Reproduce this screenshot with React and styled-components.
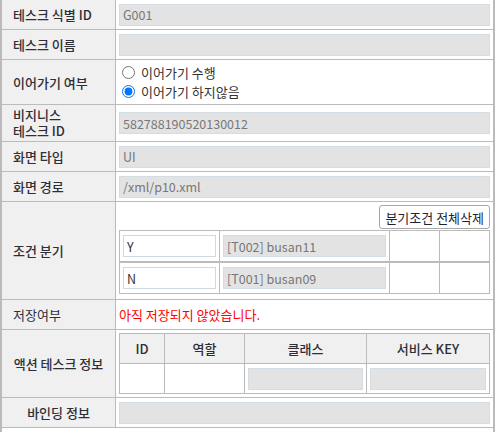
import React from 'react';
import styled, { createGlobalStyle } from 'styled-components';

const lineColor = '#bbbbbb';
const fontStack = '"Noto Sans CJK KR", "Open Sans", sans-serif';

const GlobalStyle = createGlobalStyle`
  html, body {
    margin: 0;
    padding: 0;
    background: #ffffff;
  }
  body {
    font-family: ${fontStack};
    font-size: 13px;
    color: #333333;
  }
`;

const Form = styled.div`
  width: 491px;
  border-left: 2px solid ${lineColor};
  border-right: 2px solid ${lineColor};
`;

const Row = styled.div`
  display: grid;
  grid-template-columns: 114px 1fr;
  height: ${({ h }) => h}px;
  border-bottom: 1px solid ${lineColor};
`;

const Label = styled.div`
  display: flex;
  flex-direction: column;
  justify-content: center;
  align-items: ${({ center }) => (center ? 'center' : 'flex-start')};
  padding-left: ${({ center }) => (center ? '0' : '11px')};
  background: #f0f0f0;
  border-right: 1px solid ${lineColor};
  font-weight: ${({ light }) => (light ? 400 : 500)};
  line-height: 17px;
  color: #2e2e36;
`;

const LabelLine = styled.span`
  display: block;
  height: 16px;
  line-height: 16px;
`;

const Cell = styled.div`
  display: flex;
  align-items: center;
  padding: 0 3px;
  min-width: 0;
`;

const StackCell = styled.div`
  display: flex;
  flex-direction: column;
  align-items: stretch;
  padding: 3px 3px 4px;
`;

const Field = styled.input`
  box-sizing: border-box;
  width: 100%;
  height: 22px;
  margin: 0;
  padding: 0 3px;
  border: 1px solid ${({ editable }) => (editable ? '#cfd9e2' : '#d4dce4')};
  background: ${({ editable }) => (editable ? '#ffffff' : '#e3e3e3')};
  color: ${({ editable }) => (editable ? '#333333' : '#777777')};
  font-family: ${fontStack};
  font-size: 12.5px;
  outline: none;
`;

const RadioGroup = styled.div`
  display: flex;
  flex-direction: column;
`;

const RadioOption = styled.label`
  display: flex;
  align-items: center;
  height: 19px;
  color: #333333;

  input {
    width: 13px;
    height: 13px;
    margin: 0 6px 0 3px;
  }
`;

const DeleteButton = styled.button`
  align-self: flex-end;
  height: 24px;
  margin: 0 0 1px;
  padding: 0 5px;
  background: #ffffff;
  border: 1px solid #a8a8a8;
  border-radius: 3px;
  font-family: ${fontStack};
  font-size: 13px;
  color: #1f2433;
`;

const CondRow = styled.div`
  display: grid;
  grid-template-columns: 100px 170px 50px 1fr;
  box-sizing: border-box;
  height: 32px;
  border: 1px solid ${lineColor};
`;

const CondCell = styled.div`
  display: flex;
  align-items: center;
  padding: 0 3px;
  border-right: ${({ last }) => (last ? 'none' : `1px solid ${lineColor}`)};
`;

const Warning = styled.span`
  color: #ff0000;
`;

const ActionTable = styled.table`
  width: 370px;
  border-collapse: collapse;
  table-layout: fixed;
  border: 1px solid ${lineColor};

  th, td {
    border: 1px solid ${lineColor};
    height: 29px;
    padding: 0 3px;
  }

  th {
    background: #f0f0f0;
    font-weight: 500;
    color: #2e2e36;
    text-align: center;
  }
`;

const Blank = styled.div`
  height: 8px;
`;

const conditions = [
  { key: 'Y', target: '[T002] busan11' },
  { key: 'N', target: '[T001] busan09' },
];

const actionColumns = [
  { title: 'ID', width: 45 },
  { title: '역할', width: 80 },
  { title: '클래스', width: 122 },
  { title: '서비스 KEY', width: 123 },
];

export default function App() {
  return (
    <>
      <GlobalStyle />
      <Form>
        <Row h={29}>
          <Label>테스크 식별 ID</Label>
          <Cell>
            <Field readOnly value="G001" />
          </Cell>
        </Row>
        <Row h={29}>
          <Label>테스크 이름</Label>
          <Cell>
            <Field readOnly value="" />
          </Cell>
        </Row>
        <Row h={44}>
          <Label>이어가기 여부</Label>
          <Cell>
            <RadioGroup>
              <RadioOption>
                <input type="radio" name="cont" readOnly />
                이어가기 수행
              </RadioOption>
              <RadioOption>
                <input type="radio" name="cont" defaultChecked />
                이어가기 하지않음
              </RadioOption>
            </RadioGroup>
          </Cell>
        </Row>
        <Row h={36}>
          <Label>
            <LabelLine>비지니스</LabelLine>
            <LabelLine>테스크 ID</LabelLine>
          </Label>
          <Cell>
            <Field readOnly value="582788190520130012" />
          </Cell>
        </Row>
        <Row h={29}>
          <Label>화면 타입</Label>
          <Cell>
            <Field readOnly value="UI" />
          </Cell>
        </Row>
        <Row h={29}>
          <Label>화면 경로</Label>
          <Cell>
            <Field readOnly value="/xml/p10.xml" />
          </Cell>
        </Row>
        <Row h={97}>
          <Label>조건 분기</Label>
          <StackCell>
            <DeleteButton type="button">분기조건 전체삭제</DeleteButton>
            {conditions.map((c) => (
              <CondRow key={c.key}>
                <CondCell>
                  <Field editable readOnly value={c.key} />
                </CondCell>
                <CondCell>
                  <Field readOnly value={c.target} />
                </CondCell>
                <CondCell />
                <CondCell last />
              </CondRow>
            ))}
          </StackCell>
        </Row>
        <Row h={29}>
          <Label light>저장여부</Label>
          <Cell>
            <Warning>아직 저장되지 않았습니다.</Warning>
          </Cell>
        </Row>
        <Row h={67}>
          <Label center>액션 테스크 정보</Label>
          <Cell>
            <ActionTable>
              <colgroup>
                {actionColumns.map((col) => (
                  <col key={col.title} style={{ width: col.width }} />
                ))}
              </colgroup>
              <thead>
                <tr>
                  {actionColumns.map((col) => (
                    <th key={col.title}>{col.title}</th>
                  ))}
                </tr>
              </thead>
              <tbody>
                <tr>
                  <td />
                  <td />
                  <td>
                    <Field readOnly value="" />
                  </td>
                  <td>
                    <Field readOnly value="" />
                  </td>
                </tr>
              </tbody>
            </ActionTable>
          </Cell>
        </Row>
        <Row h={29}>
          <Label center>바인딩 정보</Label>
          <Cell>
            <Field readOnly value="" />
          </Cell>
        </Row>
        <Blank />
      </Form>
    </>
  );
}
